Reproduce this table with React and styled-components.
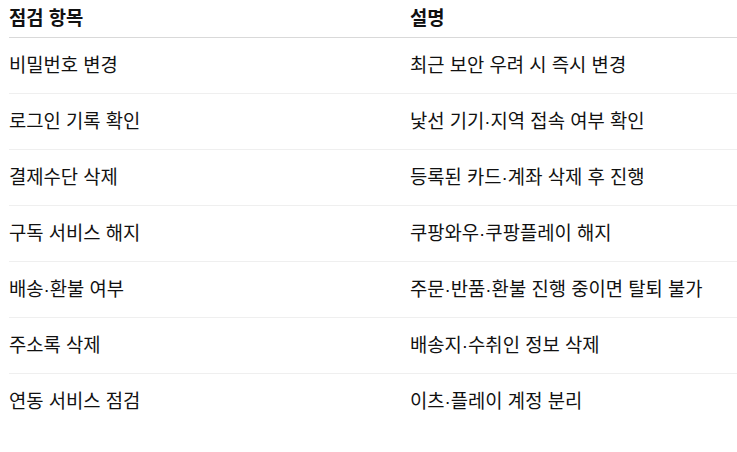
import React from 'react';
import styled, { createGlobalStyle } from 'styled-components';

const GlobalStyle = createGlobalStyle`
  body {
    margin: 0;
    background: #fff;
    font-family: "Liberation Sans", "Noto Sans CJK KR", sans-serif;
    color: #111;
  }
`;

const Table = styled.div`
  margin-left: 9px;
  width: 728px;
  display: flex;
  flex-direction: column;
`;

const Row = styled.div`
  display: grid;
  grid-template-columns: 401px 1fr;
  align-items: center;
  height: ${p => (p.$head ? '37px' : '55px')};
  border-bottom: ${p => (p.$last ? 'none' : p.$head ? '1px solid #d9d9d9' : '1px solid #efefef')};
`;

const Cell = styled.div`
  font-size: 18.8px;
  font-weight: ${p => (p.$head ? 700 : 400)};
  line-height: 22px;
  white-space: nowrap;
`;

const rows = [
  ['비밀번호 변경', '최근 보안 우려 시 즉시 변경'],
  ['로그인 기록 확인', '낯선 기기·지역 접속 여부 확인'],
  ['결제수단 삭제', '등록된 카드·계좌 삭제 후 진행'],
  ['구독 서비스 해지', '쿠팡와우·쿠팡플레이 해지'],
  ['배송·환불 여부', '주문·반품·환불 진행 중이면 탈퇴 불가'],
  ['주소록 삭제', '배송지·수취인 정보 삭제'],
  ['연동 서비스 점검', '이츠·플레이 계정 분리'],
];

function App() {
  return (
    <>
      <GlobalStyle />
      <Table>
        <Row $head>
          <Cell $head>점검 항목</Cell>
          <Cell $head>설명</Cell>
        </Row>
        {rows.map(([a, b], i) => (
          <Row key={i} $last={i === rows.length - 1}>
            <Cell>{a}</Cell>
            <Cell>{b}</Cell>
          </Row>
        ))}
      </Table>
    </>
  );
}

export default App;
